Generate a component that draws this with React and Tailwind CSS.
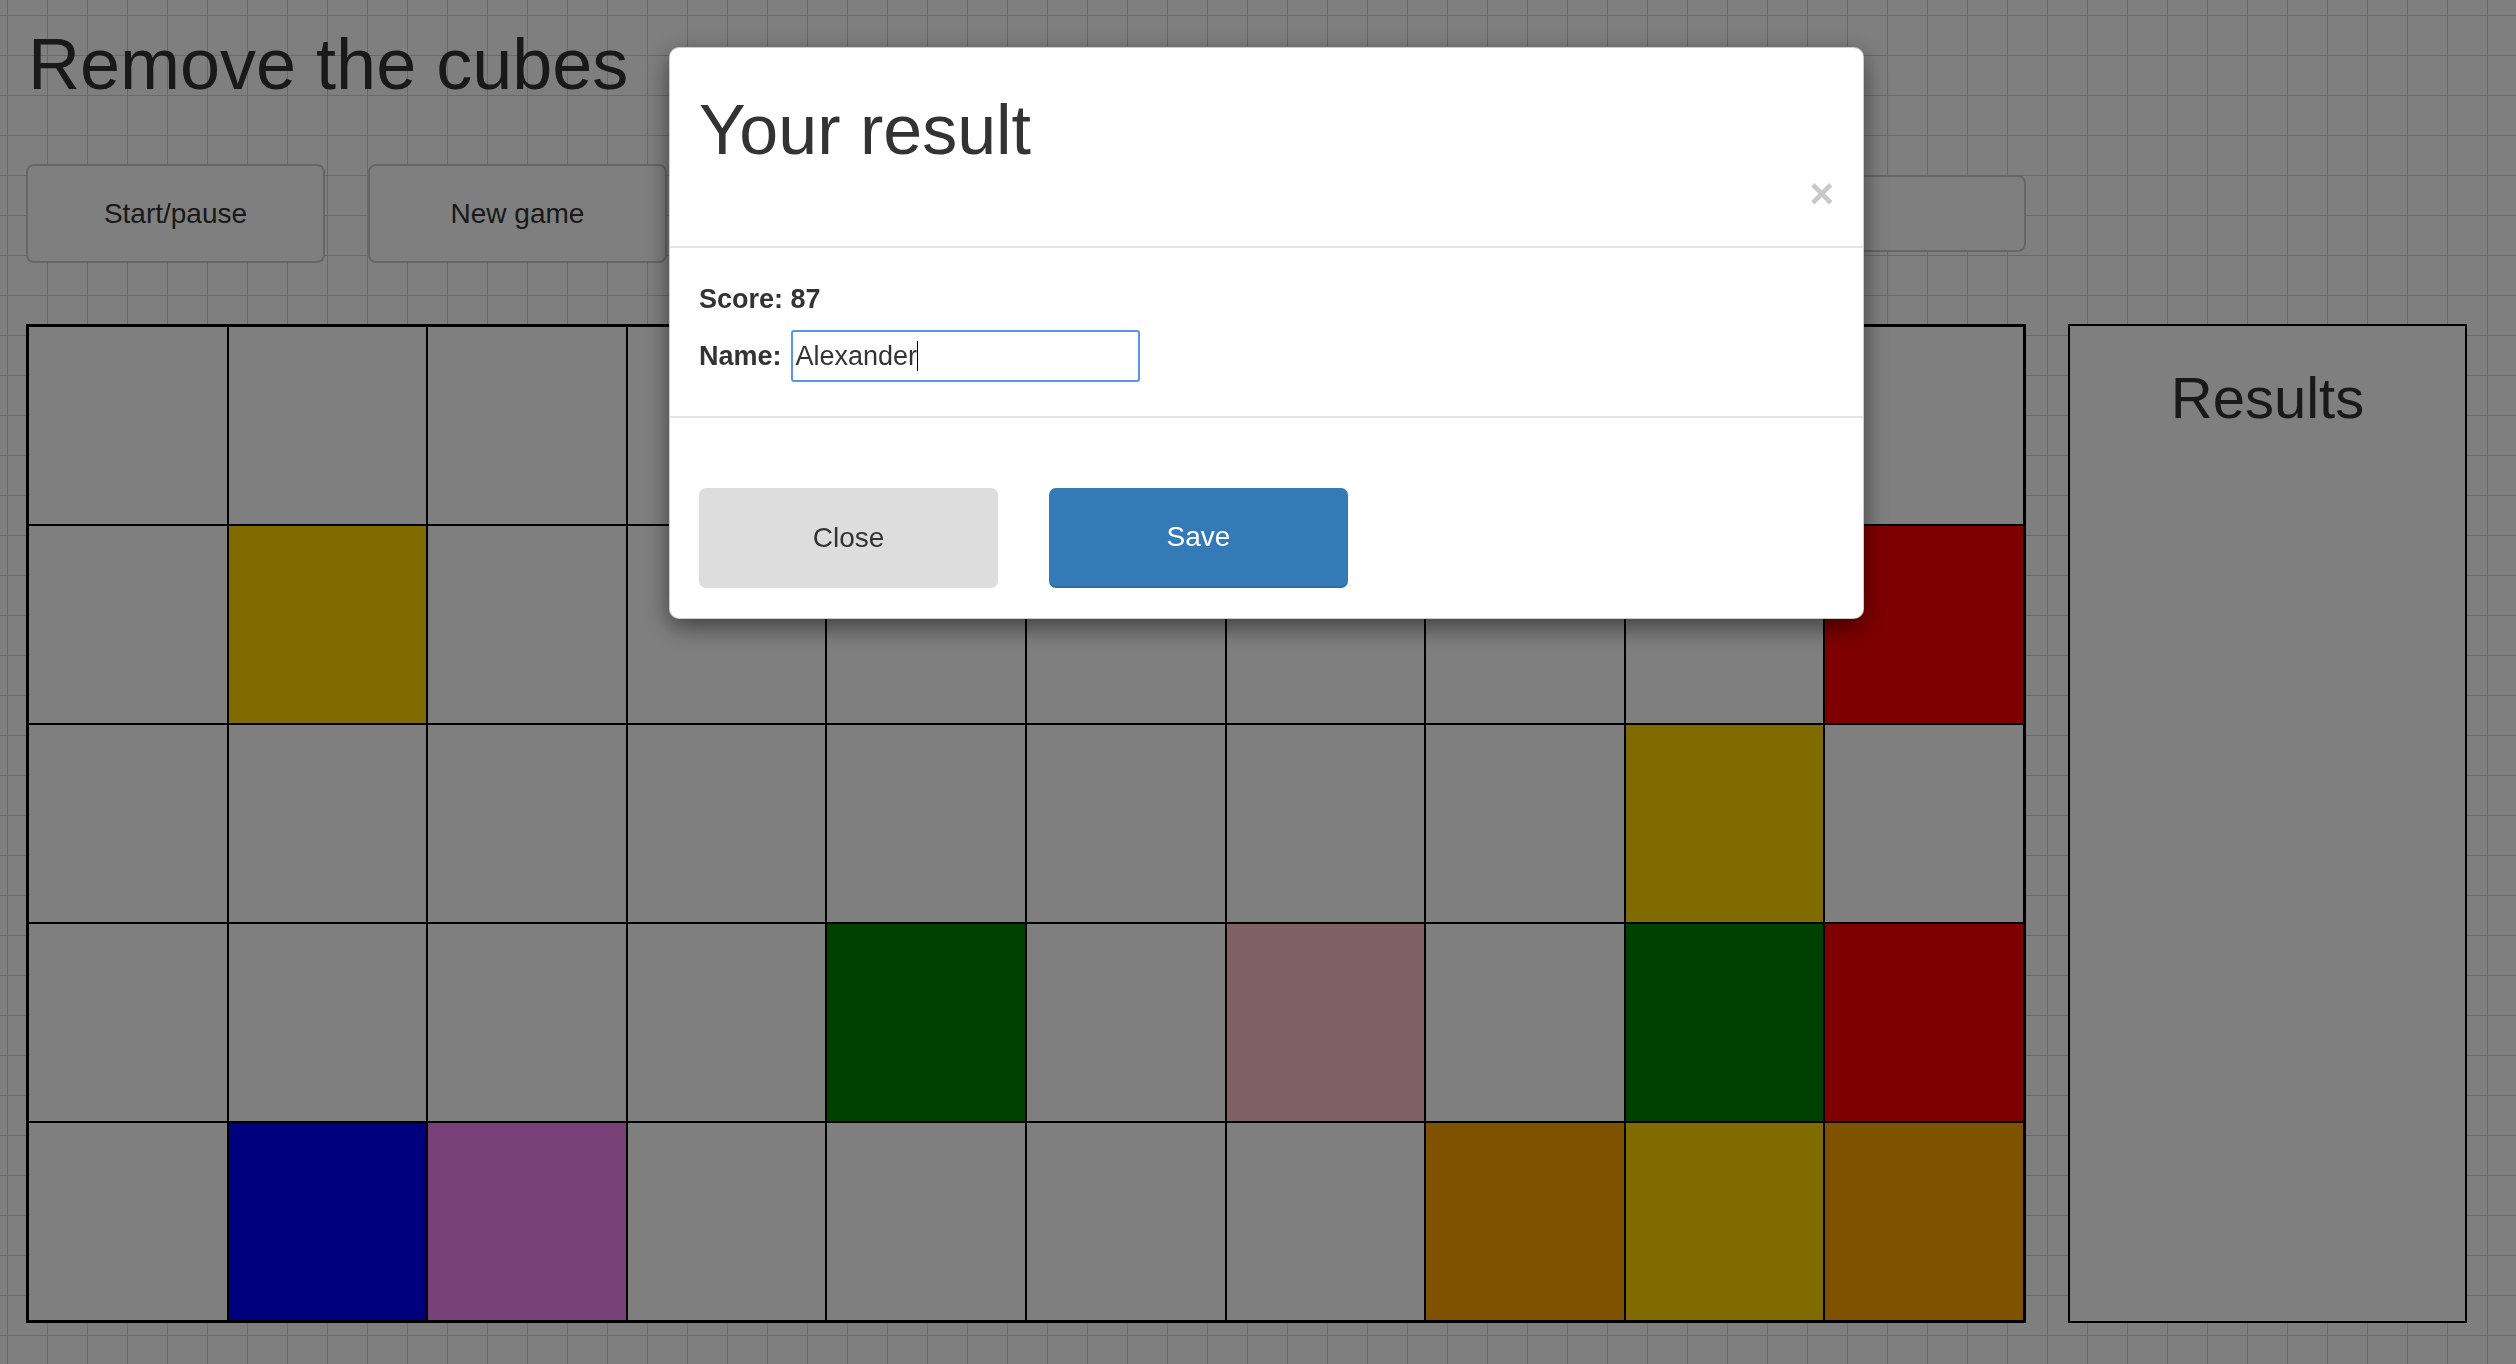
import React from 'react';

const EMPTY = 'bg-white';

// board state: 10 columns x 5 rows, null = empty cell
const board = [
    [null, null, null, null, null, null, null, null, null, null],
    [null, 'gold', null, null, null, null, null, null, null, 'red'],
    [null, null, null, null, null, null, null, null, 'gold', null],
    [null, null, null, null, 'green', null, 'pink', null, 'green', 'red'],
    [null, 'blue', 'violet', null, null, null, null, 'orange', 'gold', 'orange'],
];

const colorClass = {
    gold: 'bg-[#ffd700]',
    red: 'bg-[#ff0000]',
    green: 'bg-[#008000]',
    pink: 'bg-[#ffc0cb]',
    blue: 'bg-[#0000ff]',
    violet: 'bg-[#ee82ee]',
    orange: 'bg-[#ffa500]',
};

const PageButton = ({ children }) => (
    <button className="w-[299px] h-[99px] rounded-[8px] border-2 border-[#cccccc] bg-white text-[28px] text-[#333333]">
        {children}
    </button>
);

const ResultModal = () => (
    <div className="fixed inset-0 bg-black/50">
        <div className="absolute left-[669px] top-[47px] w-[1195px] bg-white rounded-[10px] border border-black/20 shadow-[0_8px_24px_rgba(0,0,0,0.5)] text-[#333333]">
            {/* header */}
            <div className="h-[200px] px-[29px] pt-[47px] border-b-2 border-[#e5e5e5]">
                <h4 className="text-[70px] leading-none font-normal">Your result</h4>
                <div className="flex justify-end mt-[8px]">
                    <button className="text-[42px] font-bold leading-none text-[#c9c9c9]">×</button>
                </div>
            </div>

            {/* body */}
            <div className="h-[170px] px-[29px] pt-[38px] border-b-2 border-[#e5e5e5]">
                <div className="text-[27px] leading-none font-bold">Score: 87</div>
                <div className="flex items-center mt-[17px]">
                    <label className="text-[27px] leading-none font-bold">Name:</label>
                    <div className="ml-[9px] w-[349px] h-[52px] border-2 border-[#5b93e6] rounded-[3px] pl-[3px] flex items-center text-[27px] text-[#333333]">
                        <span>Alexander</span>
                        <span className="w-px h-[30px] bg-black" />
                    </div>
                </div>
            </div>

            {/* footer */}
            <div className="px-[29px] pt-[70px] pb-[30px] flex gap-[51px]">
                <button className="w-[299px] h-[100px] rounded-[7px] bg-[#dddddd] text-[28px] text-[#333333]">
                    Close
                </button>
                <button className="w-[299px] h-[100px] rounded-[7px] bg-[#337ab7] border-b-2 border-[#2e6da4] text-[28px] text-white">
                    Save
                </button>
            </div>
        </div>
    </div>
);

const App = () => {
    return (
        <div className="min-h-screen w-full bg-white bg-[linear-gradient(to_right,#d2d2d2_1px,transparent_1px),linear-gradient(to_bottom,#d2d2d2_1px,transparent_1px)] [background-size:40px_40px] [background-position:7px_15px] font-['Liberation_Sans',Arial,sans-serif] text-[#333333]">
            <div className="pl-[26px] pt-[28px]">
                <h1 className="text-[72px] leading-none font-normal ml-[2px]">Remove the cubes</h1>

                {/* controls */}
                <div className="flex items-center gap-[43px] mt-[64px] w-[2000px]">
                    <PageButton>Start/pause</PageButton>
                    <PageButton>New game</PageButton>
                    <div className="ml-auto w-[460px] h-[77px] rounded-[8px] border-2 border-[#cccccc] bg-white" />
                </div>

                {/* board + results */}
                <div className="flex mt-[61px]">
                    <div className="w-[2000px] grid grid-cols-10 border-2 border-black">
                        {board.flat().map((c, i) => (
                            <div
                                key={i}
                                className={`h-[199px] border border-black ${c ? colorClass[c] : EMPTY}`}
                            />
                        ))}
                    </div>
                    <div className="ml-[42px] w-[399px] border-2 border-black bg-white pt-[43px] text-center">
                        <h2 className="text-[58px] leading-none font-normal">Results</h2>
                    </div>
                </div>
            </div>

            <ResultModal />
        </div>
    );
};

export default App;
